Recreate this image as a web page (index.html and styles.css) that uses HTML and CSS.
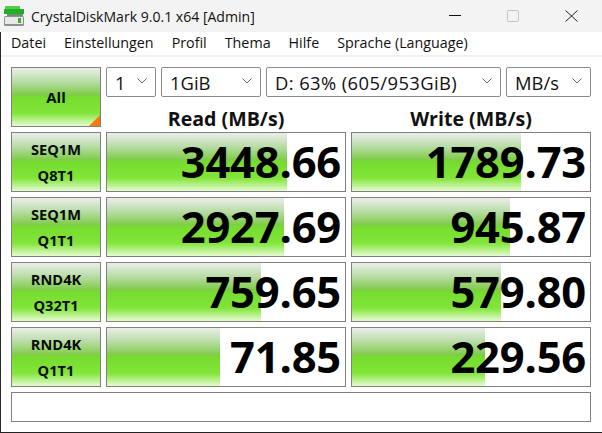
FILE: index.html
```html
<!DOCTYPE html>
<html lang="de">
<head>
<meta charset="utf-8">
<title>CrystalDiskMark</title>
<link rel="stylesheet" href="styles.css">
</head>
<body>
<div class="titlebar">
  <svg class="appicon" width="20" height="20" viewBox="0 0 20 20">
    <rect x="1" y="0" width="15" height="3" fill="#4ed04e"/>
    <rect x="0" y="3" width="20" height="5" fill="#22b022"/>
    <rect x="3" y="8" width="16" height="2" fill="#6f8f72"/>
    <rect x="0" y="10" width="20" height="10" rx="1.5" fill="#8b918f"/>
    <rect x="1" y="11" width="18" height="7" fill="#e6e9e8"/>
    <rect x="14" y="12" width="3" height="5" fill="#3fae3f"/>
  </svg>
  <span class="title">CrystalDiskMark 9.0.1 x64 [Admin]</span>
  <div class="winbtns">
    <svg class="winbtn" width="58" height="32" viewBox="0 0 58 32"><path d="M23 15.5H35" stroke="#111" fill="none"/></svg>
    <svg class="winbtn" width="58" height="32" viewBox="0 0 58 32"><rect x="23.5" y="10.5" width="11" height="11" rx="1.5" fill="none" stroke="#c4c4c4"/></svg>
    <svg class="winbtn" width="58" height="32" viewBox="0 0 58 32"><path d="M23.5 10.5L35.5 21.5M35.5 10.5L23.5 21.5" stroke="#222" fill="none"/></svg>
  </div>
</div>
<div class="window">
  <nav class="menu">
    <span>Datei</span><span>Einstellungen</span><span>Profil</span><span>Thema</span><span>Hilfe</span><span>Sprache (Language)</span>
  </nav>
  <main class="board">
    <div class="btn all">All</div>
    <div class="controls">
      <div class="head">
        <div class="select s1">1<svg class="chev" width="10" height="6" viewBox="0 0 10 6"><path d="M.5 .5L5 5L9.5 .5"/></svg></div>
        <div class="select s2">1GiB<svg class="chev" width="10" height="6" viewBox="0 0 10 6"><path d="M.5 .5L5 5L9.5 .5"/></svg></div>
        <div class="select s3"><span class="drive">D: 63% (605/953GiB)</span><svg class="chev" width="10" height="6" viewBox="0 0 10 6"><path d="M.5 .5L5 5L9.5 .5"/></svg></div>
        <div class="select s4">MB/s<svg class="chev" width="10" height="6" viewBox="0 0 10 6"><path d="M.5 .5L5 5L9.5 .5"/></svg></div>
      </div>
      <div class="cols"><div>Read (MB/s)</div><div>Write (MB/s)</div></div>
    </div>

    <div class="btn">SEQ1M<br>Q8T1</div>
    <div class="val"><i style="width:180px"></i><b>3448.66</b></div>
    <div class="val"><i style="width:169px"></i><b>1789.73</b></div>

    <div class="btn">SEQ1M<br>Q1T1</div>
    <div class="val"><i style="width:177px"></i><b>2927.69</b></div>
    <div class="val"><i style="width:158px"></i><b>945.87</b></div>

    <div class="btn">RND4K<br>Q32T1</div>
    <div class="val"><i style="width:154px"></i><b>759.65</b></div>
    <div class="val"><i style="width:149px"></i><b>579.80</b></div>

    <div class="btn">RND4K<br>Q1T1</div>
    <div class="val"><i style="width:113px"></i><b>71.85</b></div>
    <div class="val"><i style="width:133px"></i><b>229.56</b></div>

    <div class="status"></div>
  </main>
</div>
</body>
</html>
```
FILE: styles.css
```css
* { box-sizing: border-box; }
html, body { margin: 0; padding: 0; }
body {
  width: 602px;
  height: 433px;
  overflow: hidden;
  background: #fff;
  font-family: "Open Sans", "Noto Sans", "Liberation Sans", sans-serif;
  color: #000;
}
.titlebar {
  height: 32px;
  background: #f3f3f3;
  display: flex;
  align-items: center;
  padding: 0 2px 0 4px;
}
.appicon { margin-top: -1px; flex: none; }
.title { margin-left: 7px; font-size: 14.05px; color: #111; white-space: nowrap; }
.winbtns { margin-left: auto; display: flex; }
.winbtn { display: block; }
.window {
  height: 401px;
  border-left: 1px solid #2a2a2a;
  border-bottom: 1px solid #222;
  display: flex;
  flex-direction: column;
}
.menu {
  flex: none;
  height: 25px;
  border-bottom: 2px solid #f0f0f0;
  display: flex;
  gap: 18px;
  align-items: center;
  padding: 0 0 2px 10px;
  font-size: 14.3px;
  color: #111;
  white-space: nowrap;
}
.board {
  display: grid;
  grid-template-columns: 90px 240px 240px;
  grid-auto-rows: 60px;
  gap: 5px;
  padding: 10px 0 0 10px;
}
.btn {
  border: 1px solid #808080;
  background: linear-gradient(#eceeea 0%, #b6dca4 24%, #80cc4a 46%, #76dc2e 50%, #82e63a 78%, #e6fad2 100%);
  font-weight: 700;
  font-size: 14.6px;
  line-height: 26px;
  text-align: center;
  padding-top: 3px;
  color: #0a0a0a;
}
.all {
  position: relative;
  display: flex;
  align-items: center;
  justify-content: center;
  padding-top: 0;
  font-size: 15px;
}
.all::after {
  content: "";
  position: absolute;
  right: 0;
  bottom: 0;
  border-style: solid;
  border-width: 0 0 11px 11px;
  border-color: transparent transparent #f57a0a transparent;
}
.controls { grid-column: 2 / 4; display: flex; flex-direction: column; }
.head { display: flex; gap: 5px; }
.select {
  height: 30px;
  border: 1px solid #8c8c8c;
  border-radius: 2px;
  background: #fff;
  display: flex;
  align-items: center;
  justify-content: space-between;
  padding: 0 8px 0 8px;
  font-size: 18.4px;
  color: #111;
  white-space: nowrap;
}
.drive { letter-spacing: 0.4px; }
.chev { fill: none; stroke: #666; stroke-width: 1; flex: none; margin-bottom: 3px; }
.s1 { width: 50px; }
.s2 { width: 100px; }
.s3 { width: 235px; }
.s4 { width: 85px; }
.cols {
  display: grid;
  grid-template-columns: 240px 240px;
  gap: 5px;
  margin-top: 7px;
  font-size: 19.6px;
  font-weight: 700;
  text-align: center;
  line-height: 30px;
  color: #111;
}
.val {
  position: relative;
  border: 1px solid #808080;
  background: #fff;
  text-align: right;
  overflow: hidden;
}
.val i {
  position: absolute;
  left: 0;
  top: 0;
  bottom: 0;
  background: linear-gradient(#eceeea 0%, #b6dca4 24%, #80cc4a 46%, #76dc2e 50%, #82e63a 78%, #e6fad2 100%);
}
.val b {
  position: relative;
  display: block;
  font-size: 43.5px;
  line-height: 58px;
  padding-right: 4px;
  letter-spacing: -0.2px;
}
.status {
  grid-column: 1 / 4;
  height: 30px;
  border: 1px solid #808080;
}
```
